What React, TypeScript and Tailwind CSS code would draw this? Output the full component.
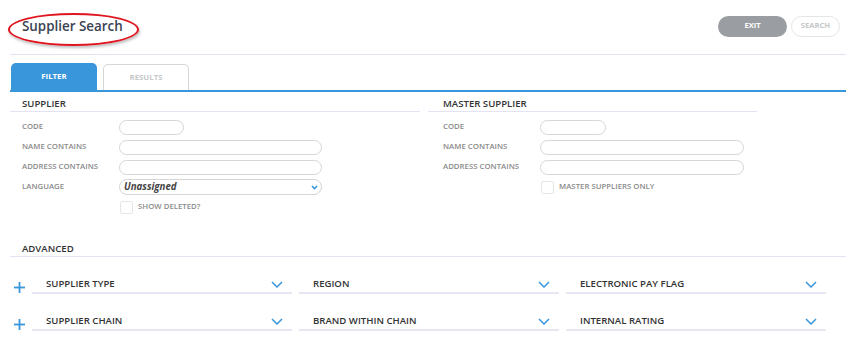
import React from "react";

const Chevron = () => (
  <svg width="12" height="7" viewBox="0 0 12 7" className="shrink-0">
    <polyline points="1,1 6,6 11,1" fill="none" stroke="#3a96db" strokeWidth="1.5" />
  </svg>
);

const SmallChevron = () => (
  <svg width="7" height="5" viewBox="0 0 7 5" className="shrink-0">
    <polyline points="1,1 3.5,3.5 6,1" fill="none" stroke="#3a96db" strokeWidth="1.6" />
  </svg>
);

const Plus = () => (
  <svg width="11" height="11" viewBox="0 0 11 11" className="shrink-0">
    <line x1="5.5" y1="0" x2="5.5" y2="11" stroke="#3a96db" strokeWidth="1.8" />
    <line x1="0" y1="5.5" x2="11" y2="5.5" stroke="#3a96db" strokeWidth="1.8" />
  </svg>
);

const Label = ({ children }: { children: React.ReactNode }) => (
  <div className="w-[97px] text-[7.8px] font-semibold text-[#8a8a8a]">{children}</div>
);

const Input = ({ w }: { w: string }) => (
  <div className={`${w} h-[15px] rounded-full border border-[#d6d6d6] bg-white`} />
);

const Row = ({ children }: { children: React.ReactNode }) => (
  <div className="h-[20px] flex items-center">{children}</div>
);

const Checkbox = ({ label }: { label: string }) => (
  <div className="flex items-center">
    <div className="w-[13px] h-[13px] border border-[#e6e6e6] rounded-[2px] bg-white" />
    <span className="ml-[5px] text-[7.8px] font-semibold text-[#8a8a8a]">{label}</span>
  </div>
);

const AdvField = ({ label }: { label: string }) => (
  <div className="w-[260px] h-[17px] flex items-center justify-between border-b-2 border-[#e6e7f2] pl-[14px] pr-[9px]">
    <span className="text-[9.6px] font-semibold text-[#333]">{label}</span>
    <Chevron />
  </div>
);

export default function App() {
  return (
    <div
      className="w-[856px] h-[351px] bg-white relative overflow-hidden"
      style={{ fontFamily: '"Open Sans", "Liberation Sans", sans-serif' }}
    >
      {/* header */}
      <div className="mx-[10px] h-[55px] flex items-center justify-between border-b border-[#e3e3ef]">
        <div className="pl-[12px] text-[13.4px] font-semibold text-[#3b4252] pb-[1px]">Supplier Search</div>
        <div className="flex items-center gap-[4px] pr-[6px] pb-[2px]">
          <div className="w-[69px] h-[21px] rounded-full bg-[#9a9ea2] flex items-center justify-center text-[7.6px] font-bold text-white">
            EXIT
          </div>
          <div className="w-[49px] h-[21px] rounded-full border border-[#e3e6e6] flex items-center justify-center text-[7.6px] font-bold text-[#c4c8c8]">
            SEARCH
          </div>
        </div>
      </div>

      {/* red ellipse annotation */}
      <div className="absolute left-[8px] top-[13px] w-[131px] h-[33px] rounded-[50%] border-2 border-[#e0141e] shadow-[1px_2px_3px_rgba(0,0,0,0.25)]" />

      {/* tabs */}
      <div className="mx-[10px] mt-[8px] flex items-end gap-[6px] border-b-2 border-[#3a96db] pl-[1px]">
        <div className="w-[86px] h-[27px] rounded-t-[5px] bg-[#3a96db] flex items-center justify-center text-[7.8px] font-bold text-white">
          FILTER
        </div>
        <div className="w-[86px] h-[26px] rounded-t-[5px] border border-b-0 border-[#d4d6d8] flex items-center justify-center text-[7.8px] font-bold text-[#c6c8ca]">
          RESULTS
        </div>
      </div>

      {/* supplier sections */}
      <div className="flex mx-[10px] gap-[8px]">
        <div className="w-[410px]">
          <div className="h-[20px] flex items-end border-b border-[#e3e3f3] pl-[12px]">
            <span className="text-[9.6px] font-semibold text-[#333] leading-[14px]">SUPPLIER</span>
          </div>
          <div className="pt-[5px] pl-[12px]">
            <Row>
              <Label>CODE</Label>
              <Input w="w-[65px]" />
            </Row>
            <Row>
              <Label>NAME CONTAINS</Label>
              <Input w="w-[203px]" />
            </Row>
            <Row>
              <Label>ADDRESS CONTAINS</Label>
              <Input w="w-[203px]" />
            </Row>
            <Row>
              <Label>LANGUAGE</Label>
              <div className="w-[203px] h-[16px] rounded-full border border-[#d6d6d6] flex items-center justify-between pl-[4px] pr-[3px]">
                <span className="text-[9.7px] font-bold italic text-[#444]">Unassigned</span>
                <SmallChevron />
              </div>
            </Row>
            <Row>
              <div className="w-[98px]" />
              <Checkbox label="SHOW DELETED?" />
            </Row>
          </div>
        </div>
        <div className="w-[329px]">
          <div className="h-[20px] flex items-end border-b border-[#e3e3f3] pl-[15px]">
            <span className="text-[9.6px] font-semibold text-[#333] leading-[14px]">MASTER SUPPLIER</span>
          </div>
          <div className="pt-[5px] pl-[15px]">
            <Row>
              <Label>CODE</Label>
              <Input w="w-[66px]" />
            </Row>
            <Row>
              <Label>NAME CONTAINS</Label>
              <Input w="w-[204px]" />
            </Row>
            <Row>
              <Label>ADDRESS CONTAINS</Label>
              <Input w="w-[204px]" />
            </Row>
            <Row>
              <div className="w-[98px]" />
              <Checkbox label="MASTER SUPPLIERS ONLY" />
            </Row>
          </div>
        </div>
      </div>

      {/* advanced */}
      <div className="mx-[10px] mt-[24px] h-[16px] flex items-end border-b border-[#e3e3f3] pl-[12px]">
        <span className="text-[9.6px] font-semibold text-[#333] leading-[14px]">ADVANCED</span>
      </div>

      <div className="mt-[20px] flex flex-col gap-[20px] ml-[14px]">
        <div className="flex items-center">
          <div className="w-[18px] pt-[4px]">
            <Plus />
          </div>
          <div className="flex gap-[7px]">
            <AdvField label="SUPPLIER TYPE" />
            <AdvField label="REGION" />
            <AdvField label="ELECTRONIC PAY FLAG" />
          </div>
        </div>
        <div className="flex items-center">
          <div className="w-[18px] pt-[4px]">
            <Plus />
          </div>
          <div className="flex gap-[7px]">
            <AdvField label="SUPPLIER CHAIN" />
            <AdvField label="BRAND WITHIN CHAIN" />
            <AdvField label="INTERNAL RATING" />
          </div>
        </div>
      </div>
    </div>
  );
}
